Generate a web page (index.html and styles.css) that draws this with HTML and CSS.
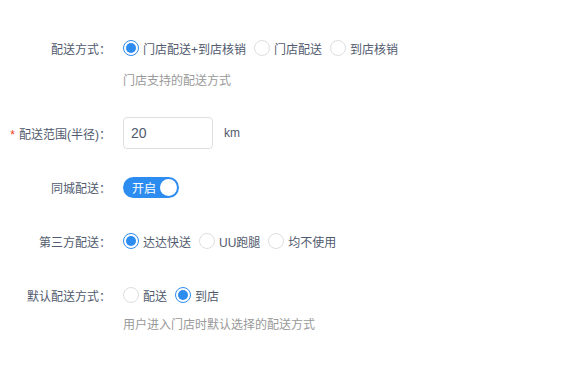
FILE: index.html
```html
<!DOCTYPE html>
<html lang="zh-CN">
<head>
    <meta charset="UTF-8">
    <meta name="viewport" content="width=device-width, initial-scale=1.0">
    <title>配送设置</title>
    <link rel="stylesheet" href="styles.css">
</head>
<body>
<form class="form" action="javascript:void(0)">
    <div class="item">
        <label class="label">配送方式：</label>
        <div class="content">
            <label class="radio"><span class="dot checked"></span>门店配送+到店核销</label>
            <label class="radio"><span class="dot"></span>门店配送</label>
            <label class="radio"><span class="dot"></span>到店核销</label>
        </div>
    </div>
    <div class="hint hint1">门店支持的配送方式</div>

    <div class="item item2">
        <label class="label"><span class="req">*</span>配送范围(半径)：</label>
        <div class="content">
            <input class="input" type="text" value="20">
            <span class="unit">km</span>
        </div>
    </div>

    <div class="item">
        <label class="label">同城配送：</label>
        <div class="content">
            <span class="switch"><span class="switchText">开启</span><span class="knob"></span></span>
        </div>
    </div>

    <div class="item">
        <label class="label">第三方配送：</label>
        <div class="content">
            <label class="radio"><span class="dot checked"></span>达达快送</label>
            <label class="radio"><span class="dot"></span>UU跑腿</label>
            <label class="radio"><span class="dot"></span>均不使用</label>
        </div>
    </div>

    <div class="item">
        <label class="label">默认配送方式：</label>
        <div class="content">
            <label class="radio"><span class="dot"></span>配送</label>
            <label class="radio"><span class="dot checked"></span>到店</label>
        </div>
    </div>
    <div class="hint hint2">用户进入门店时默认选择的配送方式</div>
</form>
</body>
</html>
```

FILE: styles.css
```css
body{
    margin: 0;
    background-color: #fff;
    font-family: "Liberation Sans", "Noto Sans CJK SC", sans-serif;
    font-size: 12px;
    color: #515a6e;
}
.form{
    padding-top: 32px;
}
.item{
    display: flex;
    align-items: center;
    height: 32px;
    margin-bottom: 22px;
}
.label{
    width: 123px;
    padding-right: 12px;
    box-sizing: border-box;
    text-align: right;
    flex-shrink: 0;
    white-space: nowrap;
}
.req{
    color: #ed4014;
    margin-right: 4px;
    font-family: "Liberation Sans", sans-serif;
}
.content{
    display: flex;
    align-items: center;
}
.radio{
    display: flex;
    align-items: center;
    margin-right: 8px;
    white-space: nowrap;
}
.dot{
    width: 16px;
    height: 16px;
    border: 1px solid #dcdee2;
    border-radius: 50%;
    box-sizing: border-box;
    margin-right: 4px;
    position: relative;
    background-color: #fff;
}
.dot.checked{
    border-color: #2d8cf0;
}
.dot.checked::after{
    content: "";
    position: absolute;
    left: 2px;
    top: 2px;
    width: 10px;
    height: 10px;
    border-radius: 50%;
    background-color: #2d8cf0;
}
.hint{
    padding-left: 123px;
    color: #999;
    line-height: 20px;
}
.hint1{
    margin-top: -15px;
    margin-bottom: 26px;
}
.hint2{
    margin-top: -18px;
}
.input{
    width: 90px;
    height: 32px;
    box-sizing: border-box;
    border: 1px solid #dcdee2;
    border-radius: 4px;
    padding: 0 7px;
    font-family: "Liberation Sans", sans-serif;
    font-size: 14px;
    color: #515a6e;
    outline: none;
}
.unit{
    margin-left: 11px;
}
.switch{
    display: flex;
    align-items: center;
    justify-content: space-between;
    width: 56px;
    height: 21px;
    border-radius: 11px;
    background-color: #2d8cf0;
    box-sizing: border-box;
    padding: 0 2px 0 9px;
}
.switchText{
    color: #fff;
    font-size: 12px;
}
.knob{
    width: 17px;
    height: 17px;
    border-radius: 50%;
    background-color: #fff;
}
```
